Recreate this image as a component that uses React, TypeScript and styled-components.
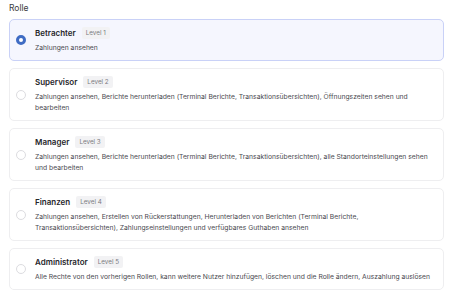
import React from 'react';
import styled, {createGlobalStyle} from 'styled-components';

const GlobalStyle = createGlobalStyle`
    body {
        margin: 0;
        background: #FFFFFF;
        font-family: Inter, "Open Sans", sans-serif;
        color: #2E2E33;
    }
`;

const Page = styled.div`
    display: flex;
    flex-direction: column;
    padding: 3px 8px 0 9px;
    width: 452px;
    box-sizing: border-box;
`;

const Label = styled.div`
    font-size: 8.5px;
    line-height: 11px;
    color: #3A3A40;
    margin-bottom: 5px;
`;

const List = styled.div`
    display: flex;
    flex-direction: column;
    gap: 7px;
`;

const Card = styled.div<{$selected: boolean}>`
    display: flex;
    align-items: center;
    padding: 7px 9px 7px 6px;
    border-radius: 5px;
    border: 1px solid ${(p) => (p.$selected ? '#C9D1F7' : '#EEEEF0')};
    background: ${(p) => (p.$selected ? '#F5F6FE' : '#FFFFFF')};
`;

const Radio = styled.div<{$selected: boolean}>`
    flex: none;
    width: 10px;
    height: 10px;
    box-sizing: border-box;
    border-radius: 50%;
    margin-right: 9px;
    border: ${(p) => (p.$selected ? '3px solid #3F6CC4' : '1px solid #DCDCE0')};
    background: #FFFFFF;
`;

const Content = styled.div`
    display: flex;
    flex-direction: column;
    gap: 3px;
    flex: 1;
`;

const Header = styled.div`
    display: flex;
    align-items: center;
    gap: 6px;
    height: 12px;
`;

const Title = styled.div`
    font-size: 8px;
    font-weight: 600;
    color: #26262B;
`;

const Badge = styled.div`
    background: #F2F2F4;
    border-radius: 2px;
    padding: 0 4px;
    height: 12px;
    line-height: 12px;
    font-size: 6.3px;
    color: #7A7A80;
`;

const Description = styled.div`
    font-size: 6.75px;
    line-height: 11px;
    color: #4A4A50;
`;

type Role = {
    name: string;
    level: number;
    text: string;
};

const roles: Role[] = [
    {name: 'Betrachter', level: 1, text: 'Zahlungen ansehen'},
    {
        name: 'Supervisor',
        level: 2,
        text: 'Zahlungen ansehen, Berichte herunterladen (Terminal Berichte, Transaktionsübersichten), Öffnungszeiten sehen und bearbeiten',
    },
    {
        name: 'Manager',
        level: 3,
        text: 'Zahlungen ansehen, Berichte herunterladen (Terminal Berichte, Transaktionsübersichten), alle Standorteinstellungen sehen und bearbeiten',
    },
    {
        name: 'Finanzen',
        level: 4,
        text: 'Zahlungen ansehen, Erstellen von Rückerstattungen, Herunterladen von Berichten (Terminal Berichte, Transaktionsübersichten), Zahlungseinstellungen und verfügbares Guthaben ansehen',
    },
    {
        name: 'Administrator',
        level: 5,
        text: 'Alle Rechte von den vorherigen Rollen, kann weitere Nutzer hinzufügen, löschen und die Rolle ändern, Auszahlung auslösen',
    },
];

const App = () => {
    const selected = 'Betrachter';

    return (
        <Page>
            <GlobalStyle/>
            <Label>{'Rolle'}</Label>
            <List>
                {roles.map((role) => (
                    <Card
                        key={role.name}
                        $selected={role.name === selected}
                    >
                        <Radio $selected={role.name === selected}/>
                        <Content>
                            <Header>
                                <Title>{role.name}</Title>
                                <Badge>{`Level ${role.level}`}</Badge>
                            </Header>
                            <Description>{role.text}</Description>
                        </Content>
                    </Card>
                ))}
            </List>
        </Page>
    );
};

export default App;
